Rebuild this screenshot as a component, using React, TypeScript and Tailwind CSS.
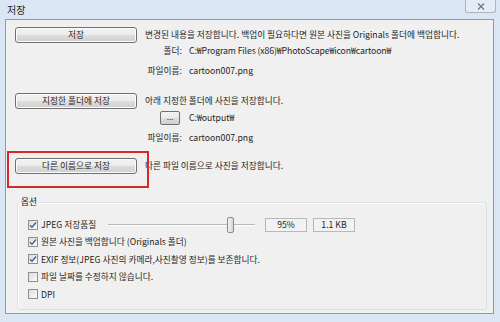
import React from 'react';

const font = "font-['Noto_Sans_CJK_KR','Liberation_Sans',sans-serif]";

function WinButton({ label, className }: { label: string; className: string }) {
  return (
    <div
      className={`flex items-center justify-center rounded-[3px] border border-[#707070] bg-[linear-gradient(#f2f2f2_0%,#ebebeb_50%,#dddddd_51%,#cfcfcf_100%)] shadow-[inset_0_0_0_1px_#fcfcfc] text-[8.7px] text-[#1e1e1e] ${className}`}
    >
      {label}
    </div>
  );
}

function CheckBox({ checked }: { checked: boolean }) {
  return (
    <div className="w-[10px] h-[10px] border border-[#8e8f8f] bg-[linear-gradient(135deg,#dcdcdc,#fbfbfb)] flex items-center justify-center shrink-0">
      {checked && (
        <svg width="8" height="8" viewBox="0 0 8 8">
          <path d="M1 4.2 L3 6.2 L7 1.5" fill="none" stroke="#4a5f97" strokeWidth="1.4" />
        </svg>
      )}
    </div>
  );
}

function OptionRow({ checked, label }: { checked: boolean; label: string }) {
  return (
    <div className="h-[17.5px] flex items-center gap-[3px]">
      <CheckBox checked={checked} />
      <span className="whitespace-nowrap">{label}</span>
    </div>
  );
}

export default function App() {
  return (
    <div className={`w-[500px] h-[322px] bg-[#dae6f3] flex flex-col overflow-hidden text-[8.7px] text-[#1e1e1e] ${font}`}>
      {/* title bar */}
      <div className="h-[19px] relative flex items-center pl-[7px] text-[10px] text-[#1e1e1e] shrink-0">
        저장
        <div className="absolute right-[4px] top-0 w-[31px] h-[13px] rounded-b-[3px] border border-t-0 border-[#a9b6c5] bg-[#e4edf7] flex items-center justify-center">
          <svg width="8" height="7" viewBox="0 0 8 7">
            <path d="M1 0.5 L7 6.5 M7 0.5 L1 6.5" stroke="#6d7785" strokeWidth="1.2" />
          </svg>
        </div>
      </div>

      {/* client area */}
      <div className="relative ml-[5px] mr-[6px] h-[295px] border border-[#8f9aa6] bg-[#f0f0f0] pl-[9px] pt-[7px] flex flex-col">
        <div className="flex items-center h-[16px]">
          <WinButton label="저장" className="w-[122px] h-[16px]" />
          <span className="ml-[8px] whitespace-nowrap">
            변경된 내용을 저장합니다. 백업이 필요하다면 원본 사진을 Originals 폴더에 백업합니다.
          </span>
        </div>
        <div className="flex items-center h-[14px] mt-[1px]">
          <span className="ml-[130px] w-[37px] text-right">폴더:</span>
          <span className="ml-[7px] whitespace-nowrap tracking-[-0.1px]">C:₩Program Files (x86)₩PhotoScape₩icon₩cartoon₩</span>
        </div>
        <div className="flex items-center h-[14px] mt-[6px]">
          <span className="ml-[130px] w-[37px] text-right">파일이름:</span>
          <span className="ml-[7px]">cartoon007.png</span>
        </div>

        <div className="flex items-center h-[16px] mt-[15px]">
          <WinButton label="지정한 폴더에 저장" className="w-[122px] h-[16px]" />
          <span className="ml-[8px] whitespace-nowrap">아래 지정한 폴더에 사진을 저장합니다.</span>
        </div>
        <div className="flex items-center h-[14px] mt-[2px]">
          <div className="ml-[145px] w-[20px] h-[14px] rounded-[2px] border border-[#707070] bg-[linear-gradient(#f2f2f2_0%,#ebebeb_50%,#dddddd_51%,#cfcfcf_100%)] flex items-center justify-center text-[8px] leading-none pb-[3px]">
            ...
          </div>
          <span className="ml-[9px]">C:₩output₩</span>
        </div>
        <div className="flex items-center h-[14px] mt-[6px]">
          <span className="ml-[130px] w-[37px] text-right">파일이름:</span>
          <span className="ml-[7px]">cartoon007.png</span>
        </div>

        <div className="flex items-center h-[16px] mt-[13px]">
          <WinButton label="다른 이름으로 저장" className="w-[122px] h-[16px]" />
          <span className="ml-[8px] whitespace-nowrap">다른 파일 이름으로 사진을 저장합니다.</span>
        </div>

        {/* options group */}
        <div className="relative mt-[28px] ml-[2px] mr-[6px] rounded-[3px] border border-[#d5dfe5] shadow-[inset_1px_1px_0_#ffffff] pl-[10px] pt-[14px] pb-[6px]">
          <span className="absolute left-[2px] top-[-7px] bg-[#f0f0f0] px-[1px] leading-[12px]">옵션</span>
          <div className="flex items-center h-[16px]">
            <div className="w-[80px] flex items-center gap-[3px]">
              <CheckBox checked />
              <span className="whitespace-nowrap">JPEG 저장품질</span>
            </div>
            <div className="relative w-[147px] h-[16px] flex items-center">
              <div className="w-full h-[2px] border-t border-[#b8b8b8] border-b border-b-white" />
              <div className="absolute left-[119px] top-0 w-[7px] h-[16px] rounded-[2px] border border-[#8b8b8b] bg-[linear-gradient(90deg,#f4f4f4,#d6d6d6)]" />
            </div>
            <div className="ml-[10px] w-[42px] h-[14px] border border-[#b9b9b9] bg-[#f2f2f2] flex items-center justify-center">
              95%
            </div>
            <div className="ml-[6px] w-[42px] h-[14px] border border-[#b9b9b9] bg-[#f2f2f2] flex items-center justify-center">
              1.1 KB
            </div>
          </div>
          <OptionRow checked label="원본 사진을 백업합니다 (Originals 폴더)" />
          <OptionRow checked label="EXIF 정보(JPEG 사진의 카메라,사진촬영 정보)를 보존합니다." />
          <OptionRow checked={false} label="파일 날짜를 수정하지 않습니다." />
          <OptionRow checked={false} label="DPI" />
        </div>

        {/* red highlight annotation */}
        <div className="absolute left-[1px] top-[131px] w-[142px] h-[37px] border-2 border-[#d42a2a] pointer-events-none" />
      </div>
    </div>
  );
}
